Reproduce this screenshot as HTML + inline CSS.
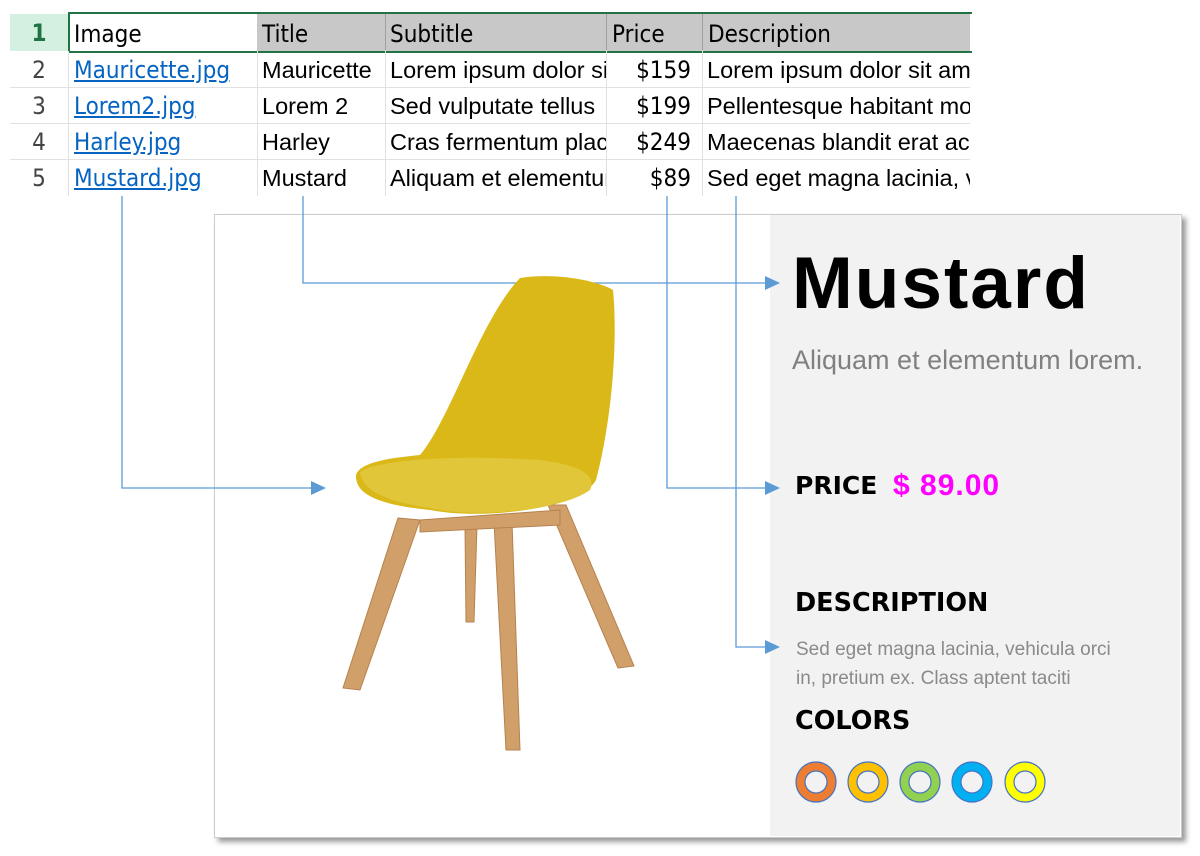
<!DOCTYPE html>
<html><head><meta charset="utf-8"><style>
body{margin:0;width:1200px;height:856px;background:#fff;position:relative;overflow:hidden;font-family:"Liberation Sans",sans-serif}
.c{position:absolute;font-size:24px;line-height:36px;white-space:nowrap;overflow:hidden;color:#000;font-family:"DejaVu Sans Condensed","Liberation Sans",sans-serif}
.l{font-family:"Liberation Sans",sans-serif;font-size:23.5px}
.card{position:absolute;left:214px;top:214px;width:966px;height:622px;background:#fff;border:1px solid #ccc;box-shadow:4px 4px 5px #999}
.panel{position:absolute;left:770px;top:215px;width:410px;height:621px;background:#f2f2f2}
.h{position:absolute;font-family:"DejaVu Sans","Liberation Sans",sans-serif;font-weight:bold;color:#000}
</style></head><body>
<div class="card"></div><div class="panel"></div>
<div style="position:absolute;left:10px;top:14px;width:58px;height:37px;background:#d3f0e0"></div>
<div style="position:absolute;left:257px;top:14px;width:713px;height:37px;background:#c8c8c8"></div>
<div style="position:absolute;left:68px;top:12px;width:902px;height:37px;border:2px solid #217346;border-right:none"></div>
<svg style="position:absolute;left:0;top:0" width="1200" height="856">
<g stroke="#e1e1e1" stroke-width="1">
<line x1="10" y1="87.5" x2="970" y2="87.5"/><line x1="10" y1="123.5" x2="970" y2="123.5"/><line x1="10" y1="159.5" x2="970" y2="159.5"/>
<line x1="68.5" y1="51" x2="68.5" y2="196"/><line x1="257.5" y1="51" x2="257.5" y2="196"/><line x1="385.5" y1="14" x2="385.5" y2="196"/><line x1="606.5" y1="14" x2="606.5" y2="196"/><line x1="702.5" y1="14" x2="702.5" y2="196"/>
</g>
<g stroke="#a0a0a0"><line x1="385.5" y1="14" x2="385.5" y2="50"/><line x1="606.5" y1="14" x2="606.5" y2="50"/><line x1="702.5" y1="14" x2="702.5" y2="50"/></g>
<g stroke="#5b9bd5" stroke-width="1.3" fill="none">
<polyline points="122,196 122,488 312,488"/>
<polyline points="303,196 303,283 766,283"/>
<polyline points="667,196 667,488 766,488"/>
<polyline points="736,196 736,647 766,647"/>
</g>
<g fill="#5b9bd5">
<polygon points="326,488 311,481 311,495"/><polygon points="780,283 765,276 765,290"/><polygon points="780,488 765,481 765,495"/><polygon points="780,647 765,640 765,654"/>
</g>
<g fill="#d1a06a" stroke="#b5824d" stroke-width="1">
<polygon points="398,518 420,520 360,690 343,688"/>
<polygon points="548,505 566,505 634,666 618,668"/>
<polygon points="465,525 477,525 474,622 466,622"/>
<polygon points="494,522 512,522 520,750 506,750"/>
<polygon points="420,520 560,510 560,525 420,532"/>
</g>
<path d="M520,278 C560,272 600,282 613,290 C618,340 612,420 596,480 C580,510 480,520 430,510 C380,505 355,495 356,475 C360,462 390,458 420,455 C450,420 480,320 520,278 Z" fill="#d9b818"/>
<path d="M360,472 C380,458 470,455 540,460 C580,465 597,475 590,490 C560,512 470,518 430,508 C390,502 362,492 360,472 Z" fill="#e2c63a"/>
<g stroke-width="9">
<circle cx="816" cy="782" r="15.5" fill="none" stroke="#ed7d31"/>
<circle cx="868" cy="782" r="15.5" fill="none" stroke="#ffc000"/>
<circle cx="920" cy="782" r="15.5" fill="none" stroke="#92d050"/>
<circle cx="972" cy="782" r="15.5" fill="none" stroke="#00b0f0"/>
<circle cx="1025" cy="782" r="15.5" fill="none" stroke="#ffff00"/>
</g>
<g stroke="#4472c4" stroke-width="1.2" fill="none">
<circle cx="816" cy="782" r="20"/><circle cx="816" cy="782" r="11"/>
<circle cx="868" cy="782" r="20"/><circle cx="868" cy="782" r="11"/>
<circle cx="920" cy="782" r="20"/><circle cx="920" cy="782" r="11"/>
<circle cx="972" cy="782" r="20"/><circle cx="972" cy="782" r="11"/>
<circle cx="1025" cy="782" r="20"/><circle cx="1025" cy="782" r="11"/>
</g>
</svg>
<div class="c" style="left:10px;top:15px;width:58px;text-align:center;font-weight:bold;color:#217346">1</div>
<div class="c" style="left:10px;top:52px;width:58px;text-align:center;color:#444">2</div>
<div class="c" style="left:10px;top:88px;width:58px;text-align:center;color:#444">3</div>
<div class="c" style="left:10px;top:124px;width:58px;text-align:center;color:#444">4</div>
<div class="c" style="left:10px;top:160px;width:58px;text-align:center;color:#444">5</div>
<div class="c" style="left:74px;top:16px">Image</div>
<div class="c" style="left:262px;top:16px">Title</div>
<div class="c" style="left:390px;top:16px">Subtitle</div>
<div class="c" style="left:612px;top:16px">Price</div>
<div class="c" style="left:708px;top:16px">Description</div>
<div class="c" style="left:74px;top:52px;color:#0563c1;text-decoration:underline">Mauricette.jpg</div>
<div class="c" style="left:74px;top:88px;color:#0563c1;text-decoration:underline">Lorem2.jpg</div>
<div class="c" style="left:74px;top:124px;color:#0563c1;text-decoration:underline">Harley.jpg</div>
<div class="c" style="left:74px;top:160px;color:#0563c1;text-decoration:underline">Mustard.jpg</div>
<div class="c l" style="left:262px;top:52px">Mauricette</div>
<div class="c l" style="left:262px;top:88px">Lorem 2</div>
<div class="c l" style="left:262px;top:124px">Harley</div>
<div class="c l" style="left:262px;top:160px">Mustard</div>
<div class="c l" style="left:390px;top:52px;width:216px">Lorem ipsum dolor sit</div>
<div class="c l" style="left:390px;top:88px;width:216px">Sed vulputate tellus</div>
<div class="c l" style="left:390px;top:124px;width:216px">Cras fermentum placerat</div>
<div class="c l" style="left:390px;top:160px;width:216px">Aliquam et elementum</div>
<div class="c" style="left:607px;top:52px;width:84px;text-align:right">$159</div>
<div class="c" style="left:607px;top:88px;width:84px;text-align:right">$199</div>
<div class="c" style="left:607px;top:124px;width:84px;text-align:right">$249</div>
<div class="c" style="left:607px;top:160px;width:84px;text-align:right">$89</div>
<div class="c l" style="left:707px;top:52px;width:263px">Lorem ipsum dolor sit amet</div>
<div class="c l" style="left:707px;top:88px;width:263px">Pellentesque habitant morbi</div>
<div class="c l" style="left:707px;top:124px;width:263px">Maecenas blandit erat ac</div>
<div class="c l" style="left:707px;top:160px;width:263px">Sed eget magna lacinia, v</div>
<div class="h" style="left:792px;top:244px;font-family:'Liberation Sans';font-size:73px;line-height:80px;letter-spacing:2px">Mustard</div>
<div style="position:absolute;left:792px;top:345px;font-size:27px;color:#808080">Aliquam et elementum lorem.</div>
<div class="h" style="left:795px;top:471px;font-size:25px;line-height:30px">PRICE</div>
<div style="position:absolute;left:893px;top:469px;font-size:30px;font-weight:bold;color:#ff00ff;line-height:34px;letter-spacing:1px">$ 89.00</div>
<div class="h" style="left:795px;top:588px;font-size:25.5px;line-height:30px">DESCRIPTION</div>
<div style="position:absolute;left:796px;top:635px;font-size:19px;line-height:29px;color:#8a8a8a;width:360px">Sed eget magna lacinia, vehicula orci<br>in, pretium ex. Class aptent taciti</div>
<div class="h" style="left:795px;top:706px;font-size:25.5px;line-height:30px">COLORS</div>
</body></html>
